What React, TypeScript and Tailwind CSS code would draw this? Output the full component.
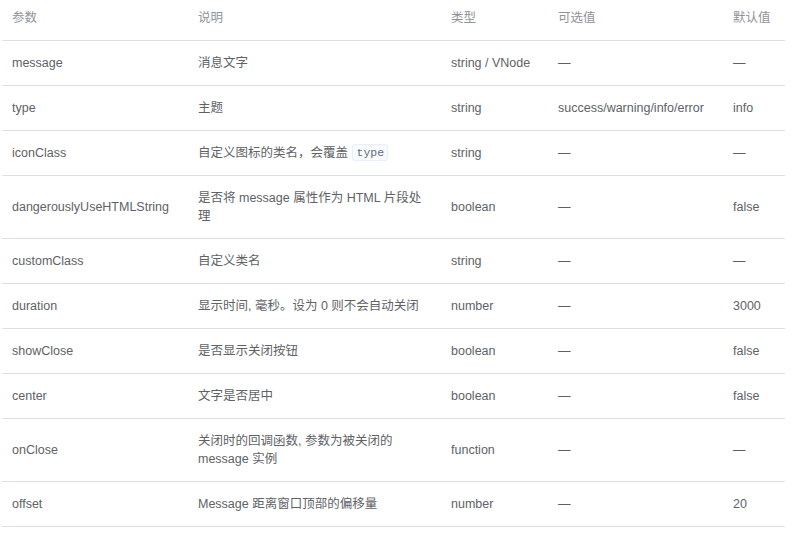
import React from "react";

type Row = { p: string; d: React.ReactNode; t: string; o: string; v: string };

const code = (s: string) => (
  <code className="mx-[1px] rounded-[3px] border border-[#eaeefb] bg-[#f9fafc] px-[3px] py-[1px] align-[1px] font-['Liberation_Mono',monospace] text-[11.5px] leading-[12px] text-[#5e6d82]">
    {s}
  </code>
);

const rows: Row[] = [
  { p: "message", d: "消息文字", t: "string / VNode", o: "—", v: "—" },
  { p: "type", d: "主题", t: "string", o: "success/warning/info/error", v: "info" },
  { p: "iconClass", d: <>自定义图标的类名，会覆盖 {code("type")}</>, t: "string", o: "—", v: "—" },
  { p: "dangerouslyUseHTMLString", d: "是否将 message 属性作为 HTML 片段处理", t: "boolean", o: "—", v: "false" },
  { p: "customClass", d: "自定义类名", t: "string", o: "—", v: "—" },
  { p: "duration", d: "显示时间, 毫秒。设为 0 则不会自动关闭", t: "number", o: "—", v: "3000" },
  { p: "showClose", d: "是否显示关闭按钮", t: "boolean", o: "—", v: "false" },
  { p: "center", d: "文字是否居中", t: "boolean", o: "—", v: "false" },
  { p: "onClose", d: "关闭时的回调函数, 参数为被关闭的 message 实例", t: "function", o: "—", v: "—" },
  { p: "offset", d: "Message 距离窗口顶部的偏移量", t: "number", o: "—", v: "20" },
];

export default function App() {
  return (
    <div className="h-[543px] w-[793px] overflow-hidden bg-white pl-[2px] font-['Liberation_Sans','Noto_Sans_CJK_SC',sans-serif] text-[12.5px] leading-[18px]">
      <table className="w-[783px] table-fixed border-collapse">
        <colgroup>
          <col className="w-[186px]" />
          <col className="w-[253px]" />
          <col className="w-[107px]" />
          <col className="w-[175px]" />
          <col className="w-[62px]" />
        </colgroup>
        <thead>
          <tr className="border-b border-[#dcdfe6]">
            {["参数", "说明", "类型", "可选值", "默认值"].map((h) => (
              <th key={h} className="whitespace-nowrap px-[10px] pb-[13px] pt-[9px] text-left font-normal text-[#909399]">
                {h}
              </th>
            ))}
          </tr>
        </thead>
        <tbody>
          {rows.map((r) => (
            <tr key={r.p} className="border-b border-[#dcdfe6] text-[#606266]">
              <td className="px-[10px] py-[13px] align-middle">{r.p}</td>
              <td className="px-[10px] py-[13px] align-middle">{r.d}</td>
              <td className="px-[10px] py-[13px] align-middle">{r.t}</td>
              <td className="px-[10px] py-[13px] align-middle">{r.o}</td>
              <td className="px-[10px] py-[13px] align-middle">{r.v}</td>
            </tr>
          ))}
        </tbody>
      </table>
    </div>
  );
}
